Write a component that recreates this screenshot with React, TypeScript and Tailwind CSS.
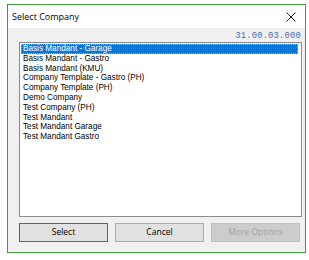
import React from "react";

const companies = [
  "Basis Mandant - Garage",
  "Basis Mandant - Gastro",
  "Basis Mandant (KMU)",
  "Company Template - Gastro (PH)",
  "Company Template (PH)",
  "Demo Company",
  "Test Company (PH)",
  "Test Mandant",
  "Test Mandant Garage",
  "Test Mandant Gastro",
];

export default function App() {
  return (
    <div className="w-[309px] h-[260px] bg-white pt-[4px] pl-[7px] font-['Liberation_Sans',Arial,sans-serif]">
      <div className="w-[299px] h-[249px] border border-[#3d9b3d] bg-[#f0f0f0] flex flex-col">
        {/* Title bar */}
        <div className="h-[23px] bg-white flex items-center justify-between pl-[4px] pr-[9px]">
          <span className="text-[9px] text-black font-['Open_Sans',sans-serif]">Select Company</span>
          <svg width="10" height="10" viewBox="0 0 10 10" className="text-[#222]">
            <path d="M0.5 0.5 L9.5 9.5 M9.5 0.5 L0.5 9.5" stroke="currentColor" strokeWidth="1" />
          </svg>
        </div>

        {/* Body */}
        <div className="flex-1 flex flex-col pl-[11px] pr-[3px]">
          <div className="h-[13px] flex items-end justify-end pr-[1px]">
            <span className="text-[8.8px] leading-none text-[#4a72b0] font-['Liberation_Mono',monospace] tracking-[0.2px]">
              31.00.03.000
            </span>
          </div>
          <div className="mt-[1px] h-[175px] bg-white border border-[#8b8b95] p-[1px] pr-[3px]">
            {companies.map((c, i) => (
              <div
                key={c}
                className={
                  i === 0
                    ? "h-[9.8px] text-[8.2px] px-[1px] bg-[#0a78d7] text-white border border-dotted border-[#7fb6e8] leading-[7.8px]"
                    : "h-[9.8px] leading-[9.8px] text-[8.2px] px-[2px] text-black"
                }
              >
                {c}
              </div>
            ))}
          </div>

          <div className="mt-[6px] flex gap-[7px] font-['Open_Sans',sans-serif]">
            <button className="w-[89px] h-[19px] bg-[#e1e1e1] border border-[#0a78d7] text-[8.5px] text-black">
              Select
            </button>
            <button className="w-[89px] h-[19px] bg-[#e1e1e1] border border-[#adadad] text-[8.5px] text-black">
              Cancel
            </button>
            <button className="w-[89px] h-[19px] bg-[#cccccc] border border-[#bfbfbf] text-[8.5px] text-[#a3a3a3]">
              More Options
            </button>
          </div>
        </div>
      </div>
    </div>
  );
}
